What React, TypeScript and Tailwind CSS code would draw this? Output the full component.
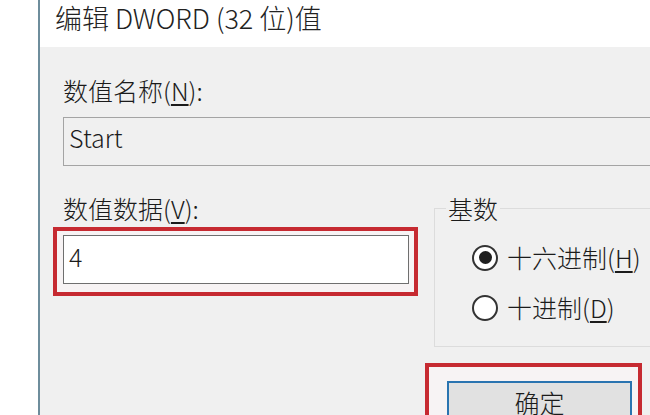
import React from "react";

function Radio({ checked }: { checked: boolean }) {
  return (
    <span className="w-[26px] h-[26px] rounded-full border-2 border-[#333333] bg-white flex items-center justify-center shrink-0">
      {checked && <span className="w-[13px] h-[13px] rounded-full bg-[#1f1f1f]" />}
    </span>
  );
}

export default function App() {
  return (
    <div className="w-[650px] h-[415px] overflow-hidden bg-white flex text-[25px] leading-[31px] font-light text-[#1b1b1b] font-['Microsoft_YaHei_UI','Segoe_UI','Noto_Sans_CJK_SC',sans-serif]">
      <div className="w-[38px] shrink-0 bg-white" />
      <div className="w-[720px] shrink-0 border-l-2 border-[#6e8d9c] flex flex-col">
        <div className="h-[47px] shrink-0 bg-white pl-[15px] text-[27px] leading-[33px] pt-[1px] text-[#222222]">
          编辑 DWORD (32 位)值
        </div>
        <div className="flex-1 bg-[#f0f0f0] pl-[23px] pt-[28px] flex flex-col">
          <div>
            数值名称(<span className="underline underline-offset-[3px]">N</span>):
          </div>
          <div className="mt-[11px] h-[49px] w-[660px] border border-[#a4a4a4] pl-[5px] pb-[8px] flex items-center">
            Start
          </div>
          <div className="mt-[27px] flex">
            <div className="w-[371px] shrink-0 flex flex-col">
              <div>
                数值数据(<span className="underline underline-offset-[3px]">V</span>):
              </div>
              <div className="-ml-[10px] mt-[3px] w-[365px] border-4 border-[#c62a31] bg-[#f7f3f4] pl-[6px] pr-[5px] pt-[4px] pb-[8px]">
                <div className="h-[49px] border border-[#6f6f6f] bg-white pl-[5px] pb-[7px] flex items-center">
                  4
                </div>
              </div>
            </div>
            <div className="flex-1 flex flex-col">
              <fieldset className="border border-[#dcdcdc] pl-[11px] pt-[18px] pb-[23px]">
                <legend className="px-[2px]">基数</legend>
                <div className="pl-[26px] flex flex-col gap-[19px]">
                  <div className="flex items-center gap-[9px]">
                    <Radio checked />
                    <span>
                      十六进制(<span className="underline underline-offset-[3px]">H</span>)
                    </span>
                  </div>
                  <div className="flex items-center gap-[9px]">
                    <Radio checked={false} />
                    <span>
                      十进制(<span className="underline underline-offset-[3px]">D</span>)
                    </span>
                  </div>
                </div>
              </fieldset>
              <div className="-ml-[9px] mt-[16px] w-[217px] border-4 border-[#c62a31] bg-[#f7f3f4] pl-[18px] pr-[6px] pt-[14px]">
                <div className="h-[60px] border-2 border-[#2a74b0] bg-[#e1e1e1] flex justify-center pt-[4px]">
                  确定
                </div>
              </div>
            </div>
          </div>
        </div>
      </div>
    </div>
  );
}
